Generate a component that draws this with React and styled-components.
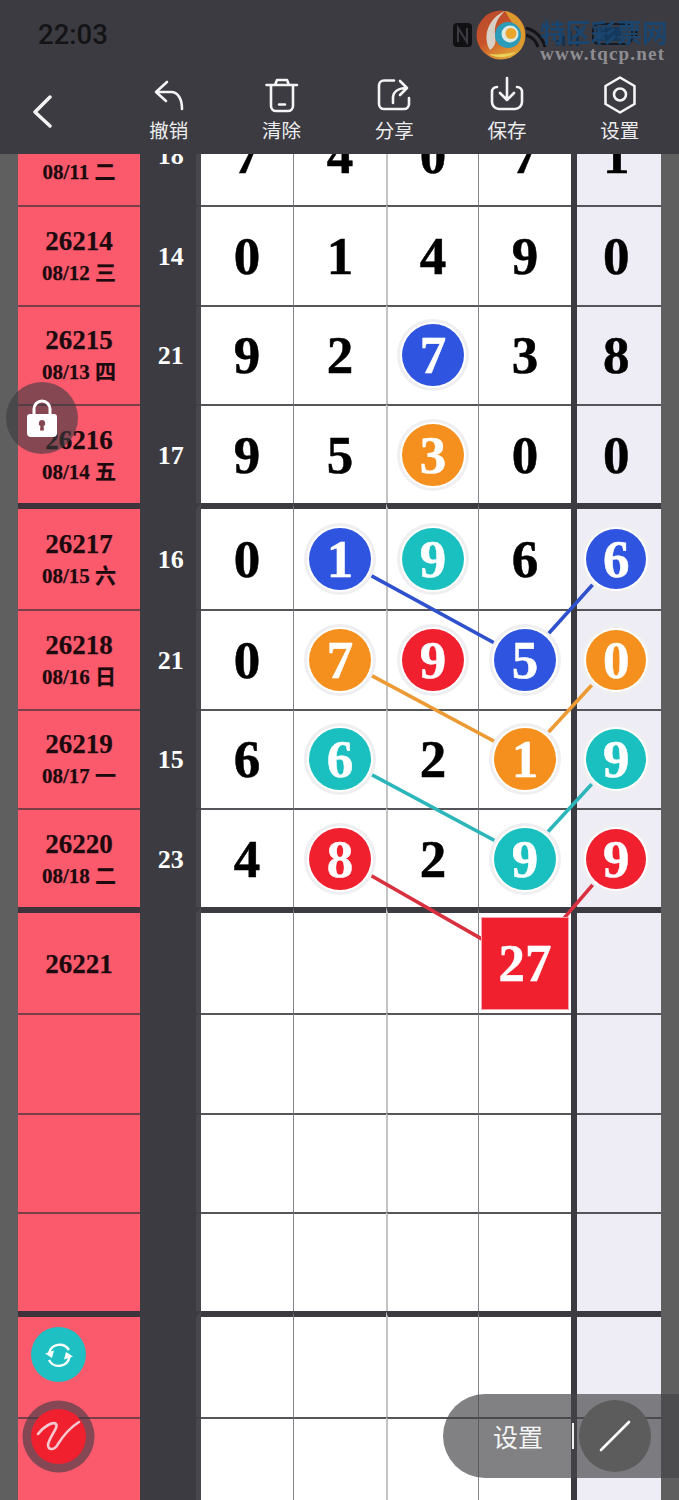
import React from "react";
import styled, { createGlobalStyle } from "styled-components";

const SERIF = `"Liberation Serif", "Noto Sans CJK SC", serif`;
const DARK = "#3b3b41";
const BLUE = "#2f55e0";
const TEAL = "#1abfc0";
const ORANGE = "#f5901e";
const RED = "#f0202f";

const GlobalStyle = createGlobalStyle`
  body {
    margin: 0;
    background: #5f5f5f;
  }
`;

const Page = styled.div`
  position: relative;
  width: 679px;
  height: 1500px;
  overflow: hidden;
  background: #5f5f5f;
`;

const Header = styled.header`
  position: relative;
  z-index: 3;
  height: 154px;
  background: ${DARK};
`;

const StatusBar = styled.div`
  display: flex;
  align-items: center;
  height: 70px;
  padding-left: 38px;
`;

const Clock = styled.span`
  margin-top: -2px;
  font-family: Roboto, "Liberation Sans", sans-serif;
  font-size: 27.5px;
  font-weight: 500;
  color: #141416;
`;

const StatusIcons = styled.svg`
  margin-left: auto;
  display: block;
`;

const Logo = styled.svg`
  position: absolute;
  left: 475px;
  top: 8px;
`;

const SiteName = styled.span`
  position: absolute;
  left: 540px;
  top: 18px;
  font-family: "Noto Sans CJK SC", sans-serif;
  font-size: 25.5px;
  font-weight: 700;
  line-height: 26px;
  white-space: nowrap;
  color: #1a456f;
  filter: blur(0.5px);
`;

const SiteUrl = styled.span`
  position: absolute;
  left: 540px;
  top: 44px;
  font-family: "Liberation Serif", serif;
  font-size: 19px;
  font-weight: 700;
  letter-spacing: 1.2px;
  line-height: 20px;
  color: #8e8e92;
`;

const Toolbar = styled.nav`
  display: flex;
  height: 84px;
`;

const BackButton = styled.div`
  width: 112.5px;
  padding: 24px 0 0 31px;
  box-sizing: border-box;
`;

const Tool = styled.div`
  display: flex;
  flex-direction: column;
  align-items: center;
  width: 112.75px;
  padding-top: 6px;
  gap: 2px;
  font-family: "Noto Sans CJK SC", sans-serif;
  font-size: 19.5px;
  line-height: 24px;
  color: #ececee;
`;

const Icon = styled.svg`
  display: block;
  fill: none;
  stroke: #f4f4f5;
  stroke-width: 2.6;
  stroke-linecap: round;
  stroke-linejoin: round;
`;

const Scroller = styled.div`
  height: 1346px;
  overflow: hidden;
`;

const Table = styled.div`
  position: relative;
  margin-top: -54.7px;
`;

const Lines = styled.svg`
  position: absolute;
  left: 0;
  top: 0;
  z-index: 1;
  pointer-events: none;
`;

const Row = styled.div`
  display: grid;
  grid-template-columns: 122px 60.7px 92.5px 92.5px 92.5px 92.5px 6px 84.3px;
  height: ${(p) => (p.$thick ? "106px" : "99.33px")};
  margin: 0 18px;
  background: ${DARK};
`;

const IssueCell = styled.div`
  display: flex;
  flex-direction: column;
  align-items: center;
  justify-content: center;
  padding-top: 2px;
  border-top: ${(p) => (p.$thick ? `6px solid #40323c` : `2px solid #7a3d49`)};
  background: #fb5a6c;
  color: #1c0a0e;
  font-family: ${SERIF};
  font-weight: 700;
  -webkit-text-stroke: 0.25px #1c0a0e;
`;

const IssueNo = styled.span`
  font-size: 27px;
  line-height: 32px;
`;

const IssueDate = styled.span`
  font-size: 21px;
  line-height: 32px;
`;

const SumCell = styled.div`
  display: flex;
  align-items: center;
  justify-content: center;
  padding: 2px 0 0 6px;
  border-top: ${(p) => (p.$thick ? "6px" : "2px")} solid ${DARK};
  border-right: 5.7px solid #47474d;
  color: #fff;
  font-family: ${SERIF};
  font-size: 26px;
  font-weight: 700;
`;

const NumCell = styled.div`
  display: flex;
  align-items: center;
  justify-content: center;
  box-sizing: border-box;
  min-width: 0;
  padding-right: ${(p) => (p.$extra ? "5px" : "0")};
  border-top: ${(p) => (p.$thick ? `6px solid ${DARK}` : `2px solid #55555a`)};
  border-left: ${(p) => (p.$divider ? `${p.$divider === "#c4c4c4" ? 2 : 1}px solid ${p.$divider}` : "none")};
  background: ${(p) => (p.$extra ? "#eeedf5" : "#fff")};
  color: #000;
  font-family: ${SERIF};
  font-size: 53px;
  font-weight: 700;
  -webkit-text-stroke: 0.5px currentColor;
`;

const Gutter = styled.div`
  background: ${DARK};
`;

const Ball = styled.span`
  position: relative;
  z-index: 2;
  display: flex;
  align-items: center;
  justify-content: center;
  flex: none;
  width: ${(p) => (p.$extra ? "60px" : "62px")};
  height: ${(p) => (p.$extra ? "60px" : "62px")};
  border-radius: 50%;
  background: ${(p) => p.$color};
  box-shadow: 0 0 0 2px #fff, 0 0 0 5px #efeff2;
  color: #fff;
`;

const Total = styled.span`
  position: relative;
  z-index: 2;
  display: flex;
  align-items: center;
  justify-content: center;
  flex: none;
  box-sizing: border-box;
  width: 88px;
  height: 93px;
  border: 1px solid #f7a3ab;
  background: ${RED};
  color: #fff;
`;

const LockButton = styled.div`
  position: absolute;
  z-index: 5;
  left: 6px;
  top: 382px;
  display: flex;
  align-items: center;
  justify-content: center;
  width: 72px;
  height: 72px;
  border-radius: 50%;
  background: rgba(60, 60, 64, 0.62);
`;

const SyncButton = styled.div`
  position: absolute;
  z-index: 5;
  left: 31px;
  top: 1327px;
  display: flex;
  align-items: center;
  justify-content: center;
  width: 55px;
  height: 55px;
  border-radius: 50%;
  background: #1fc0c4;
`;

const PenButton = styled.div`
  position: absolute;
  z-index: 5;
  left: 31px;
  top: 1409px;
  width: 55px;
  height: 55px;
  border-radius: 50%;
  background: ${RED};
  box-shadow: 0 0 0 8.5px rgba(60, 60, 68, 0.62);
`;

const DrawPill = styled.div`
  position: absolute;
  z-index: 5;
  left: 443px;
  top: 1394px;
  display: flex;
  align-items: center;
  box-sizing: border-box;
  width: 236px;
  height: 84px;
  padding-left: 50px;
  border-radius: 42px 0 0 42px;
  background: rgba(70, 70, 72, 0.68);
`;

const PillLabel = styled.span`
  width: 50px;
  font-family: "Noto Sans CJK SC", sans-serif;
  font-size: 25px;
  color: #f4f4f4;
`;

const PillDivider = styled.span`
  width: 2px;
  height: 26px;
  margin-left: 29px;
  background: #f0f0f0;
`;

const PenRound = styled.span`
  display: flex;
  align-items: center;
  justify-content: center;
  width: 72px;
  height: 72px;
  margin-left: 5px;
  border-radius: 50%;
  background: #5c5c5c;
`;

const rows = [
  { no: "26213", date: "08/11 二", sum: 18, nums: [7, 4, 0, 7, 1] },
  { no: "26214", date: "08/12 三", sum: 14, nums: [0, 1, 4, 9, 0] },
  { no: "26215", date: "08/13 四", sum: 21, nums: [9, 2, [7, BLUE], 3, 8] },
  { no: "26216", date: "08/14 五", sum: 17, nums: [9, 5, [3, ORANGE], 0, 0] },
  { no: "26217", date: "08/15 六", sum: 16, nums: [0, [1, BLUE], [9, TEAL], 6, [6, BLUE]] },
  { no: "26218", date: "08/16 日", sum: 21, nums: [0, [7, ORANGE], [9, RED], [5, BLUE], [0, ORANGE]] },
  { no: "26219", date: "08/17 一", sum: 15, nums: [6, [6, TEAL], 2, [1, ORANGE], [9, TEAL]] },
  { no: "26220", date: "08/18 二", sum: 23, nums: [4, [8, RED], 2, [9, TEAL], [9, RED]] },
  { no: "26221", total: 27 },
  {},
  {},
  {},
  {},
  {},
  {},
  {},
];

const dividers = [null, "#85858a", "#c4c4c4", "#85858a"];

// table top sits at y=99.3 on the page
const TOP = 99.3;
const links = [
  { color: "#2f52cc", pts: [[340, 559], [525, 660], [616, 559]] },
  { color: "#ec9a34", pts: [[340, 659], [525, 758], [616, 659]] },
  { color: "#2db6ba", pts: [[340, 758], [525, 857], [616, 758]] },
  { color: "#d9303f", pts: [[340, 858], [525, 964], [616, 858]] },
];

const Num = ({ value, extra }) => {
  if (Array.isArray(value)) {
    return (
      <Ball $color={value[1]} $extra={extra}>
        {value[0]}
      </Ball>
    );
  }
  return value;
};

const DataRow = ({ row, thick }) => {
  const nums = row.nums || [];
  return (
    <Row $thick={thick}>
      <IssueCell $thick={thick}>
        {row.no && <IssueNo>{row.no}</IssueNo>}
        {row.date && <IssueDate>{row.date}</IssueDate>}
      </IssueCell>
      <SumCell $thick={thick}>{row.sum}</SumCell>
      {dividers.map((divider, i) => (
        <NumCell key={i} $thick={thick} $divider={divider}>
          <Num value={nums[i]} />
          {i === 3 && row.total && <Total>{row.total}</Total>}
        </NumCell>
      ))}
      <Gutter />
      <NumCell $thick={thick} $extra>
        <Num value={nums[4]} extra />
      </NumCell>
    </Row>
  );
};

const App = () => {
  return (
    <Page>
      <GlobalStyle />
      <Header>
        <StatusBar>
          <Clock>22:03</Clock>
          <StatusIcons width="229" height="50" viewBox="450 10 229 50">
            <rect x="453" y="23" width="19" height="24" rx="4" fill="#111114" />
            <path d="M458 42V28l9 14V28" fill="none" stroke="#3b3b41" strokeWidth="2" />
            <path d="M526 28a26 26 0 0 1 19 19M526 35a18 18 0 0 1 12 12" fill="none" stroke="#141418" strokeWidth="3" />
            <rect x="556" y="40" width="3" height="6" fill="#16324f" />
            <rect x="562" y="36" width="3" height="10" fill="#16324f" />
            <rect x="569" y="31" width="3" height="15" fill="#16324f" />
            <rect x="576" y="26" width="3" height="20" fill="#16324f" />
            <rect x="593" y="24" width="39" height="20" rx="6" fill="none" stroke="#111c2a" strokeWidth="2" />
            <rect x="596" y="27" width="25" height="14" rx="3" fill="#14395c" />
            <rect x="635" y="30" width="2.5" height="8" fill="#141418" />
          </StatusIcons>
        </StatusBar>
        <Logo width="54" height="54" viewBox="0 0 54 54">
          <defs>
            <linearGradient id="logoBase" x1="0" y1="0" x2="0.6" y2="1">
              <stop offset="0" stopColor="#b5482c" />
              <stop offset="0.55" stopColor="#c9542a" />
              <stop offset="1" stopColor="#e2a436" />
            </linearGradient>
          </defs>
          <circle cx="26" cy="27" r="24.5" fill="url(#logoBase)" />
          <path d="M15 42C7 29 13 10 30 3c-8 7-11 15-10 24 1 6 1 11-5 15z" fill="#d8d0c4" />
          <path d="M30 3c12 2 20 12 20 24 0 8-4 14-9 18 4-7 5-15 1-22-4-8-9-14-12-20z" fill="#dd9a2e" />
          <circle cx="33" cy="27" r="13" fill="#2a9bb8" />
          <circle cx="35" cy="26" r="8.5" fill="#dfe7e2" />
          <circle cx="36" cy="25.5" r="5.5" fill="#eaa62c" />
          <path d="M14 46c8 5 20 4 27-2-8 2-18 3-27 2z" fill="#e9d35a" />
        </Logo>
        <SiteName>特区彩票网</SiteName>
        <SiteUrl>www.tqcp.net</SiteUrl>
        <Toolbar>
          <BackButton>
            <Icon width="24" height="34" viewBox="0 0 24 34" style={{ strokeWidth: 3.5 }}>
              <path d="M19 3L4 18l15 14" />
            </Icon>
          </BackButton>
          <Tool>
            <Icon width="40" height="40" viewBox="0 0 40 40">
              <path d="M7 16H22C29 16 33 23 33 33M18 6L7 16l10 9" />
            </Icon>
            撤销
          </Tool>
          <Tool>
            <Icon width="40" height="40" viewBox="0 0 40 40">
              <path d="M4.5 9H35M13 9l2-5h10l2 5M9 10V30a5 5 0 0 0 5 5H26a5 5 0 0 0 5-5V10M17 28.5h6" />
            </Icon>
            清除
          </Tool>
          <Tool>
            <Icon width="40" height="40" viewBox="0 0 40 40">
              <path d="M20 4.5H10a5 5 0 0 0-5 5V28a5 5 0 0 0 5 5H30a5 5 0 0 0 5-5V22" />
              <path d="M19 27V22C19 16 24 12 33 12M26 5l7 7-7 7" />
            </Icon>
            分享
          </Tool>
          <Tool>
            <Icon width="40" height="40" viewBox="0 0 40 40">
              <path d="M10 11C7 11 5 13 5 16V26a7 7 0 0 0 7 7H28a7 7 0 0 0 7-7V16C35 13 33 11 30 11" />
              <path d="M20 2V24M13 17l7 7 7-7" />
            </Icon>
            保存
          </Tool>
          <Tool>
            <Icon width="40" height="40" viewBox="0 0 40 40">
              <path d="M20 1.5L34.5 10V28L20 36.5 5.5 28V10z" />
              <circle cx="20" cy="18.5" r="6" />
            </Icon>
            设置
          </Tool>
        </Toolbar>
      </Header>

      <Scroller>
        <Table>
          <Lines width="679" height="1000" viewBox={`0 ${TOP} 679 1000`}>
            {links.map((link) => (
              <polyline
                key={link.color}
                points={link.pts.map((p) => p.join(",")).join(" ")}
                fill="none"
                stroke={link.color}
                strokeWidth="3.6"
              />
            ))}
          </Lines>
          {rows.map((row, i) => (
            <DataRow key={i} row={row} thick={i % 4 === 0} />
          ))}
        </Table>
      </Scroller>

      <LockButton>
        <svg width="34" height="40" viewBox="0 0 34 40">
          <path
            d="M9 17V11a8 8 0 0 1 16 0v6"
            fill="none"
            stroke="#fff"
            strokeWidth="3"
          />
          <path
            fillRule="evenodd"
            fill="#fff"
            d="M5 16h24a3 3 0 0 1 3 3v16a4 4 0 0 1-4 4H6a4 4 0 0 1-4-4V19a3 3 0 0 1 3-3zM17 22a3.2 3.2 0 0 0-1.6 6l-.4 4.5h4l-.4-4.5A3.2 3.2 0 0 0 17 22z"
          />
        </svg>
      </LockButton>

      <SyncButton>
        <svg width="34" height="34" viewBox="0 0 34 34">
          <path d="M7 15A11 11 0 0 1 27 12M27.5 19A11 11 0 0 1 7 22" fill="none" stroke="#fff" strokeWidth="2.4" />
          <path d="M3 15.5l9-3-2 7.5zM31 18.5l-9 3 2-7.5z" fill="#fff" />
        </svg>
      </SyncButton>

      <PenButton>
        <svg width="55" height="55" viewBox="0 0 55 55">
          <path
            d="M7 25C12 18 22 12 25 15C28 18 18 28 17 36C17 42 24 41 27 35C32 27 40 18 48 13"
            fill="none"
            stroke="#f6c8cf"
            strokeWidth="2.6"
            strokeLinecap="round"
          />
        </svg>
      </PenButton>

      <DrawPill>
        <PillLabel>设置</PillLabel>
        <PillDivider />
        <PenRound>
          <svg width="34" height="34" viewBox="0 0 34 34">
            <path d="M3 31L31 3" stroke="#fff" strokeWidth="2.6" strokeLinecap="round" />
          </svg>
        </PenRound>
      </DrawPill>
    </Page>
  );
};

export default App;
